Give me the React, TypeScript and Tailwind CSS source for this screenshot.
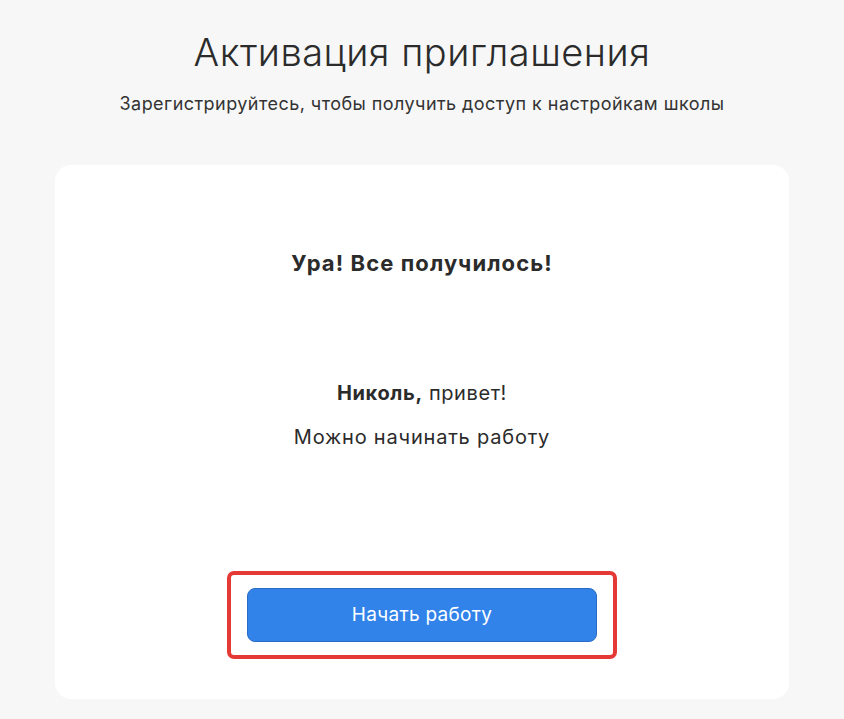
export default function App() {
  return (
    <div className="min-h-[719px] w-full bg-[#f7f7f7] font-['Inter',sans-serif] text-[#2b2b2b]">
      <div className="flex flex-col items-center pt-[28px]">
        <h1 className="text-[38px] font-light leading-[48px] tracking-[0.5px]">Активация приглашения</h1>
        <p className="mt-[15px] text-[18px] leading-[26px] tracking-[0.45px] text-[#333]">
          Зарегистрируйтесь, чтобы получить доступ к настройкам школы
        </p>
      </div>
      <div className="mx-[55px] mt-[48px] flex h-[534px] flex-col items-center rounded-[16px] bg-white">
        <h2 className="mt-[83px] text-[22px] font-bold leading-[30px] tracking-[1.1px]">Ура! Все получилось!</h2>
        <p className="mt-[101px] text-[20px] leading-[28px] tracking-[0.6px]">
          <span className="font-bold">Николь,</span> привет!
        </p>
        <p className="mt-[16px] text-[20px] leading-[28px] tracking-[0.8px]">Можно начинать работу</p>
        <div className="mt-[120px] rounded-[7px] border-4 border-[#e53935] px-[16px] py-[13px]">
          <button className="h-[54px] w-[350px] rounded-[8px] border border-[#2a6cc4] bg-[#3183ea] text-[19px] tracking-[0.3px] text-white">
            Начать работу
          </button>
        </div>
      </div>
    </div>
  )
}
